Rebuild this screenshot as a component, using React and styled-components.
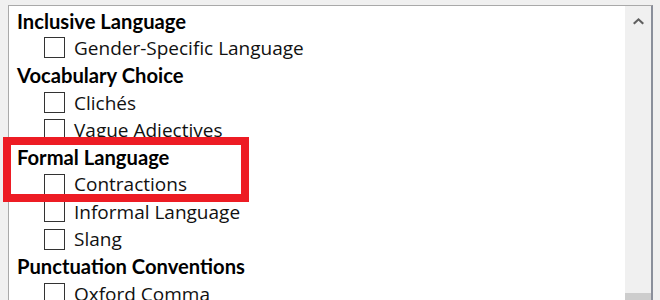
import React from 'react';
import styled, { createGlobalStyle } from 'styled-components';

const GlobalStyle = createGlobalStyle`
  html, body {
    margin: 0;
    padding: 0;
    background: #f0f0f0;
    overflow: hidden;
  }
`;

const groups = [
  { title: 'Inclusive Language', items: ['Gender-Specific Language'] },
  { title: 'Vocabulary Choice', items: ['Clichés', 'Vague Adjectives'] },
  { title: 'Formal Language', items: ['Contractions', 'Informal Language', 'Slang'] },
  { title: 'Punctuation Conventions', items: ['Oxford Comma'] },
];

function App() {
  return (
    <>
      <GlobalStyle />
      <Stage>
        <Panel>
          <List>
            {groups.map((g) => (
              <React.Fragment key={g.title}>
                <Heading>{g.title}</Heading>
                {g.items.map((item) => (
                  <Option key={item}>
                    <Box />
                    <span>{item}</span>
                  </Option>
                ))}
              </React.Fragment>
            ))}
          </List>
          <Scrollbar>
            <ArrowUp>
              <svg width="11" height="7" viewBox="0 0 11 7">
                <path d="M0 5 L5.5 0 L11 5 L9.5 6.5 L5.5 2.8 L1.5 6.5 Z" fill="#606060" />
              </svg>
            </ArrowUp>
            <Thumb />
          </Scrollbar>
        </Panel>
        <Highlight />
      </Stage>
    </>
  );
}

export default App;

const Stage = styled.div`
  position: relative;
  width: 660px;
  height: 300px;
  overflow: hidden;
  padding: 5px 0 0 8px;
  box-sizing: border-box;
`;

const Panel = styled.div`
  display: flex;
  width: 645px;
  height: 330px;
  box-sizing: border-box;
  background: #ffffff;
  border-top: 1px solid #a9a9a9;
  border-left: 1px solid #a9a9a9;
  border-right: 2px solid #8a8f9b;
`;

const List = styled.div`
  flex: 1;
  padding: 1px 0 0 8px;
  font-family: "Open Sans", "Noto Sans", sans-serif;
  font-size: 19px;
  color: #000;
`;

const Heading = styled.div`
  height: 27.3px;
  display: flex;
  align-items: center;
  font-family: Lato, "Open Sans", sans-serif;
  font-size: 20.2px;
  font-weight: 700;
`;

const Option = styled.div`
  height: 27.3px;
  display: flex;
  align-items: center;
  padding-left: 27px;
  gap: 9px;
  color: #111;
`;

const Box = styled.span`
  width: 21px;
  height: 21px;
  box-sizing: border-box;
  border: 1.5px solid #333333;
  background: #fff;
  flex: none;
`;

const Scrollbar = styled.div`
  width: 26px;
  background: #f0f0f0;
  display: flex;
  flex-direction: column;
  justify-content: space-between;
`;

const ArrowUp = styled.div`
  height: 32px;
  display: flex;
  justify-content: center;
  align-items: center;
  padding-bottom: 2px;
  box-sizing: border-box;
`;

const Thumb = styled.div`
  height: 42px;
  background: #cdcdcd;
`;

const Highlight = styled.div`
  position: absolute;
  left: 3px;
  top: 137px;
  width: 246px;
  height: 65px;
  box-sizing: border-box;
  border: 8px solid #ed1c24;
`;
